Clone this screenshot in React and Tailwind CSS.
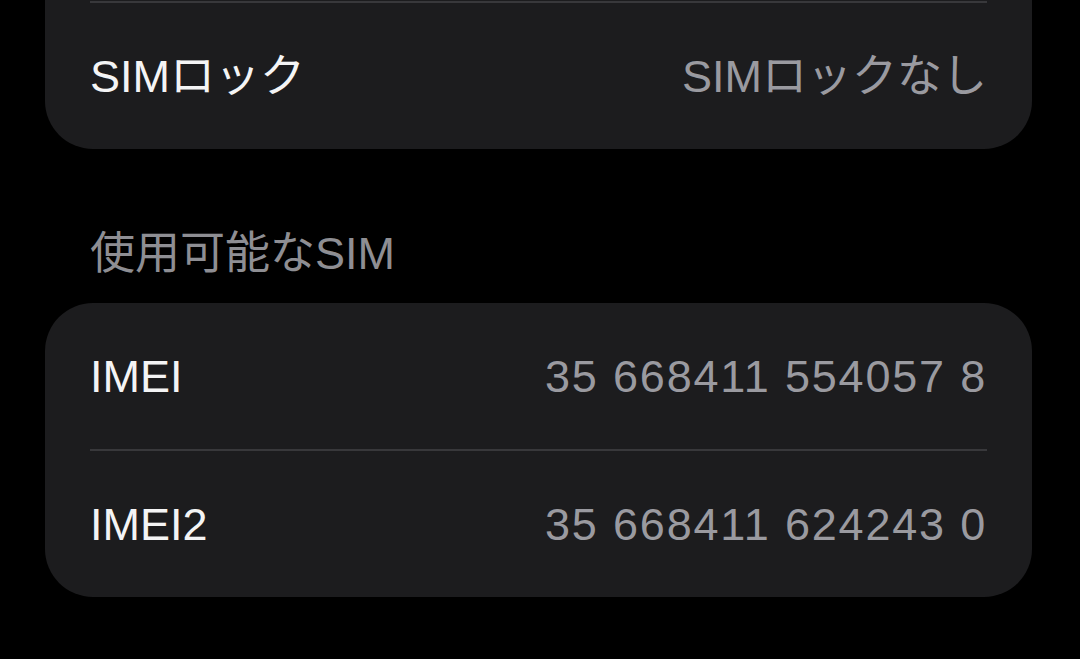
import React from 'react';

const font = { fontFamily: '"Liberation Sans", "Noto Sans CJK JP", sans-serif' };

function Row({ label, value, numeric }) {
  return (
    <div className="flex h-[146px] items-center justify-between px-[45px]">
      <span className="text-[45px] leading-none text-[#f4f4f5]">{label}</span>
      <span
        className={`text-[45px] leading-none text-[#9a9aa0] ${numeric ? 'tracking-[1.8px]' : ''}`}
      >
        {value}
      </span>
    </div>
  );
}

function Divider() {
  return <div className="mx-[45px] h-[2px] bg-[#38383b]" />;
}

export default function App() {
  return (
    <div className="h-[659px] w-[1080px] overflow-hidden bg-black" style={font}>
      <div className="ml-[45px] w-[987px]">
        {/* card continuing from above the fold */}
        <div className="rounded-b-[48px] bg-[#1c1c1e] pt-[1px]">
          <Divider />
          <Row label="SIMロック" value="SIMロックなし" />
        </div>

        {/* section header */}
        <div className="flex h-[154px] items-end px-[45px] pb-[27px]">
          <span className="text-[45px] leading-none text-[#8e8e93]">使用可能なSIM</span>
        </div>

        <div className="rounded-[48px] bg-[#1c1c1e]">
          <Row label="IMEI" value="35 668411 554057 8" numeric />
          <Divider />
          <Row label="IMEI2" value="35 668411 624243 0" numeric />
        </div>
      </div>
    </div>
  );
}
